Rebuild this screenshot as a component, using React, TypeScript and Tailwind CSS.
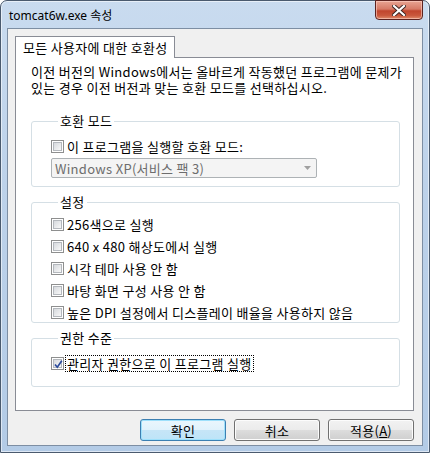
import React from "react";

const KR = "font-['Noto_Sans_CJK_KR','Noto_Sans',sans-serif]";

function Check({ checked = false }: { checked?: boolean }) {
  return (
    <div className="w-[13px] h-[13px] shrink-0 border border-[#8e8f8f] bg-white p-[1px]">
      <div className="relative w-full h-full border border-[#b4b8bd] bg-gradient-to-br from-[#d6d9dd] to-[#f8f8f8]">
        {checked && (
          <svg className="absolute left-[-1px] top-[-1px]" width="11" height="11" viewBox="0 0 11 11">
            <path d="M2 5.5 L4.3 8.2 L8.8 1.8" fill="none" stroke="#2a4a9c" strokeWidth="1.7" />
          </svg>
        )}
      </div>
    </div>
  );
}

function Row({ label, checked }: { label: string; checked?: boolean }) {
  return (
    <div className="h-[17px] flex items-center gap-[3px]">
      <Check checked={checked} />
      <span className="leading-[15px] whitespace-nowrap">{label}</span>
    </div>
  );
}

function Btn({ children, def = false }: { children: React.ReactNode; def?: boolean }) {
  return (
    <div
      className={
        "w-[86px] h-[22px] rounded-[3px] border flex items-center justify-center " +
        (def
          ? "border-[#3c7fb1] shadow-[inset_0_0_0_1px_#9ee0fb] bg-[linear-gradient(#eaf6fd_0%,#e0f2fc_50%,#c6e5f7_50%,#bde4f8_100%)]"
          : "border-[#707070] shadow-[inset_0_0_0_1px_#fcfcfc] bg-[linear-gradient(#f2f2f2_0%,#ebebeb_50%,#dddddd_50%,#cfcfcf_100%)]")
      }
    >
      <span className="leading-[15px]">{children}</span>
    </div>
  );
}

export default function App() {
  return (
    <div className={`w-[430px] h-[453px] ${KR} text-[13px] tracking-[0.3px] text-black`}>
      <div className="w-full h-full flex flex-col rounded-t-[7px] border border-[#4a5a6e] bg-[linear-gradient(180deg,#c9dbef_0%,#bdd2ea_40%,#b3cbe6_100%)] shadow-[inset_0_0_0_1px_rgba(255,255,255,0.55)]">
        {/* Title bar */}
        <div className="h-[27px] flex items-start justify-between shrink-0">
          <div className="pl-[8px] pt-[7px] text-[12px] tracking-normal leading-[15px] font-['Noto_Sans','Noto_Sans_CJK_KR',sans-serif] text-black">
            tomcat6w.exe 속성
          </div>
          <div className="mr-[6px] mt-[-1px] w-[48px] h-[20px] rounded-b-[4px] border border-[#5c2320] bg-[linear-gradient(180deg,#e8a493_0%,#d67a66_45%,#c1452d_55%,#c9573c_80%,#e08c6c_100%)] shadow-[inset_0_0_0_1px_rgba(255,210,200,0.6)] flex items-center justify-center">
            <svg width="14" height="11" viewBox="0 0 14 11">
              <path d="M2 1 L12 10 M12 1 L2 10" stroke="#3a2320" strokeWidth="4" strokeLinecap="square" />
              <path d="M2 1 L12 10 M12 1 L2 10" stroke="#ffffff" strokeWidth="2.2" strokeLinecap="square" />
            </svg>
          </div>
        </div>

        {/* Client */}
        <div className="flex-1 mx-[6px] mb-[6px] border border-[#7d8ea3] bg-[#f0f0f0] flex flex-col pt-[7px] pl-[7px] pr-[8px]">
          {/* Tab header */}
          <div className="flex">
            <div className="relative z-10 -mb-px h-[22px] w-[160px] border border-b-0 border-[#898c95] bg-white flex items-center pl-[7px]">
              <span className="leading-[15px] whitespace-nowrap">모든 사용자에 대한 호환성</span>
            </div>
          </div>
          {/* Tab panel */}
          <div className="h-[354px] border border-[#898c95] bg-white pl-[15px] pt-[6px]">
            <p className="leading-[16px] whitespace-nowrap">
              이전 버전의 Windows에서는 올바르게 작동했던 프로그램에 문제가
              <br />
              있는 경우 이전 버전과 맞는 호환 모드를 선택하십시오.
            </p>

            <fieldset className="mt-[17px] w-[369px] rounded-[3px] border border-[#d5dfe5] px-[19px] pb-[8px]">
              <legend className="ml-[7px] px-[2px] leading-[16px]">호환 모드</legend>
              <div className="pt-[9px]">
                <Row label="이 프로그램을 실행할 호환 모드:" />
              </div>
              <div className="mt-[3px] w-[266px] h-[20px] rounded-[2px] border border-[#adb2b5] bg-[#f4f4f4] flex items-center justify-between pl-[3px] pr-[5px] text-[#6d6d6d]">
                <span className="leading-[15px]">Windows XP(서비스 팩 3)</span>
                <svg width="7" height="4" viewBox="0 0 7 4">
                  <path d="M0 0 H7 L3.5 4 Z" fill="#a0a0a0" />
                </svg>
              </div>
            </fieldset>

            <fieldset className="mt-[7px] w-[369px] rounded-[3px] border border-[#d5dfe5] px-[19px] pb-[1px]">
              <legend className="ml-[7px] px-[2px] leading-[16px]">설정</legend>
              <div className="pt-[6px] flex flex-col gap-[5px]">
                <Row label="256색으로 실행" />
                <Row label="640 x 480 해상도에서 실행" />
                <Row label="시각 테마 사용 안 함" />
                <Row label="바탕 화면 구성 사용 안 함" />
                <Row label="높은 DPI 설정에서 디스플레이 배율을 사용하지 않음" />
              </div>
            </fieldset>

            <fieldset className="mt-[7px] w-[369px] rounded-[3px] border border-[#d5dfe5] px-[19px] pb-[14px]">
              <legend className="ml-[7px] px-[2px] leading-[16px]">권한 수준</legend>
              <div className="pt-[9px]">
                <div className="h-[17px] flex items-center gap-[2px]">
                  <Check checked />
                  <span className="leading-[15px] whitespace-nowrap outline outline-1 outline-dotted outline-black px-[1px]">
                    관리자 권한으로 이 프로그램 실행
                  </span>
                </div>
              </div>
            </fieldset>
          </div>

          {/* Buttons */}
          <div className="mt-[8px] flex justify-end gap-[8px]">
            <Btn def>확인</Btn>
            <Btn>취소</Btn>
            <Btn>
              적용(<span className="underline">A</span>)
            </Btn>
          </div>
        </div>
      </div>
    </div>
  );
}
